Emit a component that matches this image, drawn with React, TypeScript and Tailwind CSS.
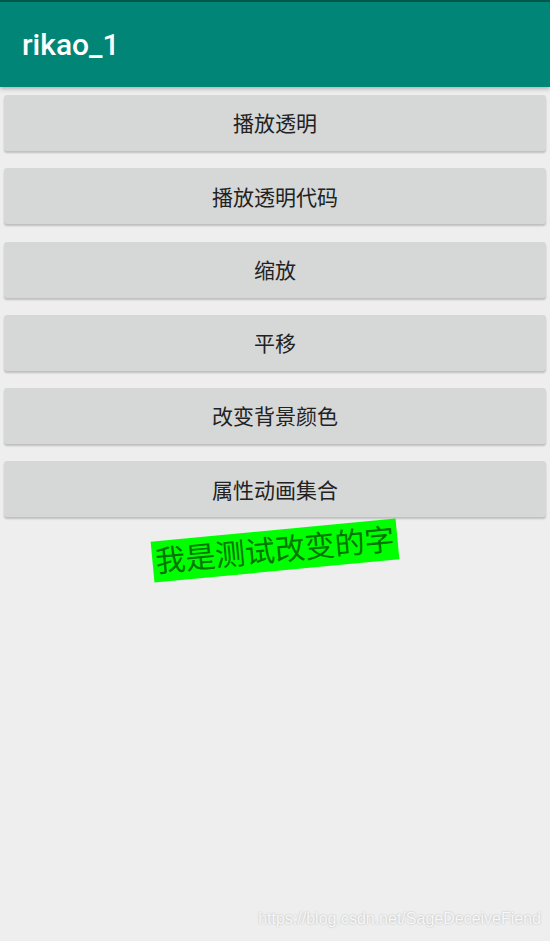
import React from "react";

const buttons = ["播放透明", "播放透明代码", "缩放", "平移", "改变背景颜色", "属性动画集合"];

export default function App() {
  return (
    <div
      className="relative w-[550px] h-[941px] bg-[#eeeeee] overflow-hidden"
      style={{ fontFamily: 'Roboto, "Noto Sans CJK SC", sans-serif' }}
    >
      <div className="relative h-[87px] bg-[#008577] border-t-2 border-[#00574b] shadow-[0_2px_4px_rgba(0,0,0,0.25)] flex items-center pl-[22px]">
        <span className="text-white text-[30px] font-medium leading-none mt-[1px]">rikao_1</span>
      </div>
      <div className="flex flex-col gap-[17.3px] px-[4px] pt-[8px]">
        {buttons.map((b) => (
          <div
            key={b}
            className="h-[56px] pt-[4px] rounded-[3px] bg-[#d6d7d7] shadow-[0_2px_2px_rgba(0,0,0,0.2)] flex items-center justify-center text-[21px] text-[#222222]"
          >
            {b}
          </div>
        ))}
      </div>
      <div className="flex justify-center mt-[13px]">
        <div className="w-[246px] h-[41px] bg-[#00ff00] flex items-center justify-center text-[30px] leading-none text-[#007500] -rotate-[5.4deg] whitespace-nowrap">
          我是测试改变的字
        </div>
      </div>
      <div
        className="absolute right-[9px] bottom-[10px] text-[16px] text-[#f7f7f7] [text-shadow:0_0_2px_rgba(0,0,0,0.25)]"
        style={{ fontFamily: '"Liberation Sans", Arial, sans-serif' }}
      >
        https://blog.csdn.net/SageDeceiveFiend
      </div>
    </div>
  );
}
